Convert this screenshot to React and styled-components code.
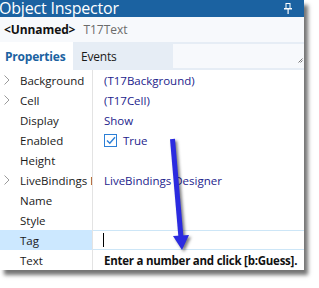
import React from "react";
import styled, { createGlobalStyle } from "styled-components";

const Global = createGlobalStyle`
  html, body { margin: 0; padding: 0; background: #ffffff; }
  body { font-family: "Open Sans", "Noto Sans", sans-serif; }
`;

const Stage = styled.div`
  position: relative;
  width: 319px;
  height: 288px;
  overflow: hidden;
  background: #fff;
`;

const Panel = styled.div`
  width: 304px;
  height: 270px;
  background: #fff;
  box-shadow: 4px 5px 4px rgba(0, 0, 0, 0.55);
  display: flex;
  flex-direction: column;
  overflow: hidden;
`;

const TitleBar = styled.div`
  height: 17px;
  background: #1b62a1;
  color: #fff;
  display: flex;
  align-items: center;
  justify-content: space-between;
  font-size: 16px;
  line-height: 17px;
  padding-right: 12px;
  flex-shrink: 0;
`;

const TitleText = styled.span`
  margin-left: -1px;
  letter-spacing: -0.2px;
`;

const Header = styled.div`
  height: 25px;
  background: #f7f9fc;
  display: flex;
  align-items: center;
  padding-left: 4px;
  gap: 8px;
  font-size: 12px;
  flex-shrink: 0;
`;

const ObjName = styled.span`
  font-weight: 700;
  color: #111;
  letter-spacing: -0.1px;
`;

const ObjType = styled.span`
  color: #6b6b6b;
`;

const TabBar = styled.div`
  height: 28px;
  background: #e6edf5;
  display: flex;
  align-items: stretch;
  flex-shrink: 0;
`;

const Tab = styled.div`
  width: ${(p) => p.$w}px;
  display: flex;
  align-items: center;
  padding-left: ${(p) => p.$pl}px;
  box-sizing: border-box;
  font-size: 12px;
  letter-spacing: -0.2px;
  font-weight: ${(p) => (p.$active ? 700 : 400)};
  color: ${(p) => (p.$active ? "#1b62a1" : "#1a1a1a")};
  background: ${(p) => (p.$active ? "#fff" : "transparent")};
`;

const Search = styled.div`
  flex: 1;
  margin: 2px 0 2px 27px;
  background: #f7f9fc;
  position: relative;
`;

const Grip = styled.svg`
  position: absolute;
  right: 1px;
  bottom: 5px;
`;

const Grid = styled.div`
  display: grid;
  grid-template-columns: 93px 1fr;
  grid-auto-rows: 20px;
  font-size: 11.5px;
`;

const NameCell = styled.div`
  position: relative;
  display: flex;
  align-items: center;
  padding-left: 20px;
  border-right: 1px solid #e3e3e3;
  background: ${(p) => (p.$selected ? "#cce8ff" : "transparent")};
  color: #1a1a1a;
  white-space: nowrap;
  overflow: hidden;
`;

const Chevron = styled.svg`
  position: absolute;
  left: 4px;
  top: 5px;
`;

const ValueCell = styled.div`
  display: flex;
  align-items: center;
  padding-left: ${(p) => (p.$editing ? 10 : 11)}px;
  gap: 6px;
  color: ${(p) => (p.$bold ? "#111" : "#23238c")};
  font-weight: ${(p) => (p.$bold ? 700 : 400)};
  letter-spacing: ${(p) => (p.$bold ? "-0.25px" : "0")};
  font-size: 11.5px;
  white-space: nowrap;
  overflow: hidden;
  border-top: ${(p) => (p.$editing ? "1px solid #cde6f7" : "none")};
  border-bottom: ${(p) => (p.$editing ? "1px solid #cde6f7" : "none")};
  box-sizing: border-box;
`;

const Caret = styled.span`
  width: 1px;
  height: 14px;
  background: #000;
`;

const Box = styled.span`
  width: 13px;
  height: 13px;
  border: 1px solid #2c7fd6;
  box-sizing: border-box;
  display: flex;
  align-items: center;
  justify-content: center;
`;

const Arrow = styled.svg`
  position: absolute;
  left: 160px;
  top: 130px;
  filter: drop-shadow(2px 2px 1.5px rgba(0, 0, 0, 0.5));
`;

const rows = [
  { name: "Background", value: "(T17Background)", expand: true },
  { name: "Cell", value: "(T17Cell)", expand: true },
  { name: "Display", value: "Show" },
  { name: "Enabled", check: true, value: "True" },
  { name: "Height", value: "" },
  { name: "LiveBindings Designer", value: "LiveBindings Designer", expand: true },
  { name: "Name", value: "" },
  { name: "Style", value: "" },
  { name: "Tag", value: "", selected: true },
  { name: "Text", value: "Enter a number and click [b:Guess].", bold: true },
];

export default function App() {
  return (
    <Stage>
      <Global />
      <Panel>
        <TitleBar>
          <TitleText>Object Inspector</TitleText>
          <svg width="8" height="11" viewBox="0 0 8 11">
            <rect x="2" y="0.5" width="4" height="5" fill="none" stroke="#fff" />
            <rect x="0" y="5" width="8" height="1.5" fill="#fff" />
            <rect x="3.5" y="6" width="1.2" height="5" fill="#fff" />
          </svg>
        </TitleBar>
        <Header>
          <ObjName>&lt;Unnamed&gt;</ObjName>
          <ObjType>T17Text</ObjType>
        </Header>
        <TabBar>
          <Tab $active $w={73} $pl={5}>Properties</Tab>
          <Tab $w={73} $pl={8}>Events</Tab>
          <Search>
            <Grip width="5" height="5" viewBox="0 0 5 5">
              <path d="M0.5 4.5 L4.5 0.5 M2.5 4.5 L4.5 2.5" stroke="#555" strokeWidth="0.8" />
            </Grip>
          </Search>
        </TabBar>
        <Grid>
          {rows.map((r) => (
            <React.Fragment key={r.name}>
              <NameCell $selected={r.selected}>
                {r.expand && (
                  <Chevron width="6" height="10" viewBox="0 0 6 10">
                    <polyline points="0.5,0.5 5,5 0.5,9.5" fill="none" stroke="#9a9a9a" strokeWidth="1" />
                  </Chevron>
                )}
                {r.name}
              </NameCell>
              <ValueCell $bold={r.bold} $editing={r.selected}>
                {r.selected && <Caret />}
                {r.check && (
                  <Box>
                    <svg width="10" height="9" viewBox="0 0 10 9">
                      <polyline points="1,4.5 3.8,7.3 9,1.2" fill="none" stroke="#2c7fd6" strokeWidth="1.4" />
                    </svg>
                  </Box>
                )}
                {r.value}
              </ValueCell>
            </React.Fragment>
          ))}
        </Grid>
      </Panel>
      <Arrow width="40" height="130" viewBox="0 0 40 130">
        <line x1="12.5" y1="9" x2="21" y2="108" stroke="#2b2be0" strokeWidth="5" strokeLinecap="butt" />
        <polygon points="13,106 29,105 22,120" fill="#2b2be0" />
      </Arrow>
    </Stage>
  );
}
